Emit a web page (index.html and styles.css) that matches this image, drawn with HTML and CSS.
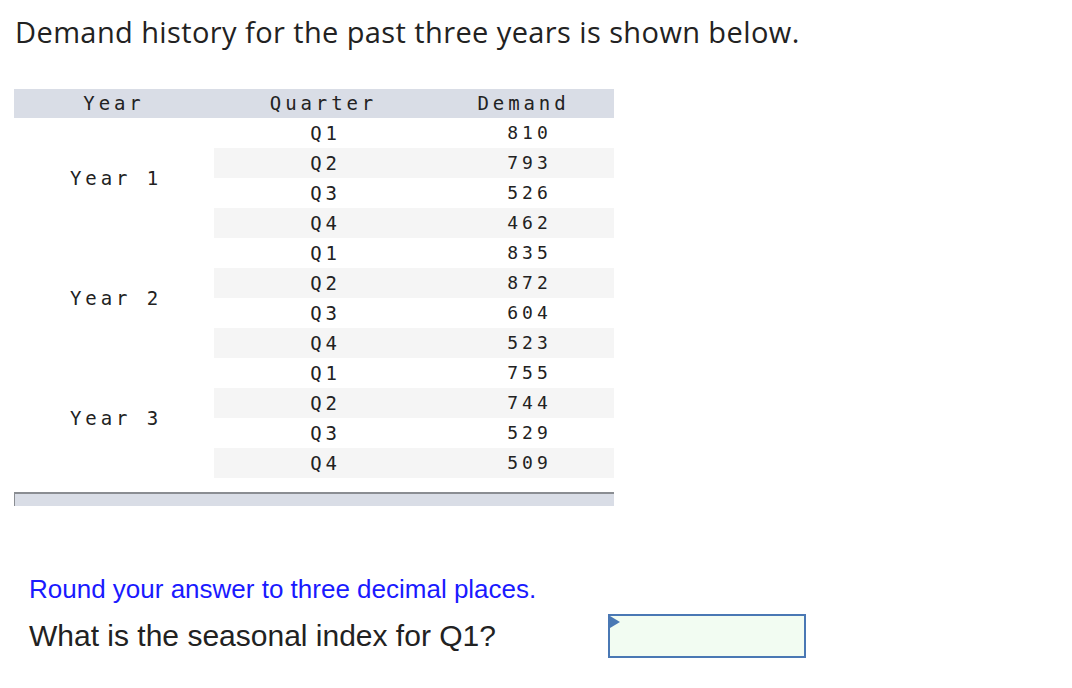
FILE: index.html
```html
<!DOCTYPE html>
<html>
<head>
<meta charset="utf-8">
<link rel="stylesheet" href="styles.css">
</head>
<body>
<div class="page">
  <p class="intro">Demand history for the past three years is shown below.</p>
  <div class="table-wrap">
    <table class="demand">
      <thead>
        <tr><th class="c-year">Year</th><th class="c-q">Quarter</th><th class="c-d">Demand</th></tr>
      </thead>
      <tbody>
        <tr><td class="year" rowspan="4">Year 1</td><td class="q">Q1</td><td class="num">810</td></tr>
        <tr class="alt"><td class="q">Q2</td><td class="num">793</td></tr>
        <tr><td class="q">Q3</td><td class="num">526</td></tr>
        <tr class="alt"><td class="q">Q4</td><td class="num">462</td></tr>
        <tr><td class="year" rowspan="4">Year 2</td><td class="q">Q1</td><td class="num">835</td></tr>
        <tr class="alt"><td class="q">Q2</td><td class="num">872</td></tr>
        <tr><td class="q">Q3</td><td class="num">604</td></tr>
        <tr class="alt"><td class="q">Q4</td><td class="num">523</td></tr>
        <tr><td class="year" rowspan="4">Year 3</td><td class="q">Q1</td><td class="num">755</td></tr>
        <tr class="alt"><td class="q">Q2</td><td class="num">744</td></tr>
        <tr><td class="q">Q3</td><td class="num">529</td></tr>
        <tr class="alt"><td class="q">Q4</td><td class="num">509</td></tr>
      </tbody>
    </table>
    <div class="table-foot"></div>
  </div>
  <div class="question">
    <p class="hint">Round your answer to three decimal places.</p>
    <div class="ask">
      <span class="ask-text">What is the seasonal index for Q1?</span>
      <div class="answer"><span class="flag"></span></div>
    </div>
  </div>
</div>
</body>
</html>
```
FILE: styles.css
```css
html, body {
  margin: 0;
  padding: 0;
  background: #ffffff;
}
.page {
  padding: 0 0 0 14px;
}
.intro {
  margin: 0;
  padding-top: 14px;
  padding-left: 1px;
  font-family: "Open Sans", "Liberation Sans", sans-serif;
  font-size: 29px;
  letter-spacing: 0.4px;
  line-height: 36px;
  color: #222222;
}
.table-wrap {
  margin-top: 39px;
  width: 600px;
}
.demand {
  border-collapse: collapse;
  width: 600px;
  table-layout: fixed;
}
.demand th {
  background: #d9dde6;
  height: 29px;
  padding: 0;
  line-height: 29px;
  font-family: "DejaVu Sans Mono", monospace;
  font-weight: normal;
  font-size: 19px;
  letter-spacing: 3.9px;
  color: #222222;
  text-align: center;
}
.c-year { width: 200px; }
.c-q { width: 219px; }
.c-d { width: 181px; }
.demand td {
  height: 30px;
  padding: 0;
  line-height: 30px;
  text-align: center;
  color: #222222;
}
.demand td.year, .demand td.q {
  font-family: "DejaVu Sans Mono", monospace;
  font-size: 19px;
  letter-spacing: 3.9px;
  padding-left: 4px;
}
.demand td.num {
  font-family: "DejaVu Sans Mono", monospace;
  font-size: 18px;
  letter-spacing: 4px;
  padding-left: 12px;
}
.demand tr.alt td {
  background: #f5f5f5;
}
.table-foot {
  margin-top: 14px;
  height: 12px;
  background: #d9dde6;
  border-top: 2px solid #8a8d92;
  border-left: 1px solid #8a8d92;
}
.question {
  margin-top: 68px;
  padding-left: 15px;
  font-family: "Liberation Sans", Arial, sans-serif;
}
.hint {
  margin: 0;
  font-size: 26px;
  line-height: 30px;
  color: #1a1aff;
}
.ask {
  display: flex;
  align-items: center;
  margin-top: 10px;
}
.ask-text {
  font-size: 30px;
  color: #222222;
  width: 579px;
}
.answer {
  position: relative;
  width: 194px;
  height: 40px;
  border: 2px solid #4a78b4;
  background: #f2fcf2;
}
.flag {
  position: absolute;
  left: 0;
  top: 0;
  width: 0;
  height: 0;
  border-top: 6px solid transparent;
  border-bottom: 6px solid transparent;
  border-left: 10px solid #4a78b4;
}
```
